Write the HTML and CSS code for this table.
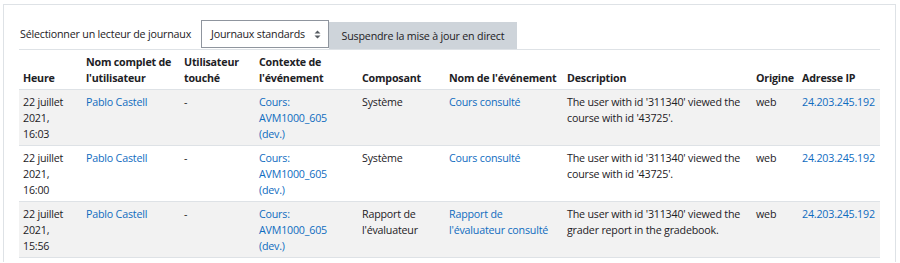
FILE: index.html
```html
<!DOCTYPE html>
<html lang="fr">
<head>
<meta charset="utf-8">
<title>Journaux</title>
<link rel="stylesheet" href="styles.css">
</head>
<body>
<div class="card">
  <div class="controls">
    <span class="label">Sélectionner un lecteur de journaux</span>
    <div class="select">
      <span>Journaux standards</span>
      <svg class="updown" width="7" height="9" viewBox="0 0 7 9"><path d="M0.5 3.5 L3.5 0.5 L6.5 3.5 Z M0.5 5.5 L3.5 8.5 L6.5 5.5 Z" fill="#555a60"/></svg>
    </div>
    <button class="btn">Suspendre la mise à jour en direct</button>
  </div>
  <table class="logs">
    <colgroup>
      <col class="c-time"><col class="c-name"><col class="c-aff"><col class="c-ctx"><col class="c-comp"><col class="c-ev"><col class="c-desc"><col class="c-orig"><col class="c-ip">
    </colgroup>
    <thead>
      <tr>
        <th>Heure</th>
        <th>Nom complet de l'utilisateur</th>
        <th>Utilisateur touché</th>
        <th>Contexte de l'événement</th>
        <th>Composant</th>
        <th>Nom de l'événement</th>
        <th>Description</th>
        <th>Origine</th>
        <th>Adresse IP</th>
      </tr>
    </thead>
    <tbody>
      <tr>
        <td>22 juillet 2021, 16:03</td>
        <td><a href="#">Pablo Castell</a></td>
        <td>-</td>
        <td><a href="#">Cours: AVM1000_605 (dev.)</a></td>
        <td>Système</td>
        <td><a href="#">Cours consulté</a></td>
        <td>The user with id '311340' viewed the course with id '43725'.</td>
        <td>web</td>
        <td><a href="#">24.203.245.192</a></td>
      </tr>
      <tr>
        <td>22 juillet 2021, 16:00</td>
        <td><a href="#">Pablo Castell</a></td>
        <td>-</td>
        <td><a href="#">Cours: AVM1000_605 (dev.)</a></td>
        <td>Système</td>
        <td><a href="#">Cours consulté</a></td>
        <td>The user with id '311340' viewed the course with id '43725'.</td>
        <td>web</td>
        <td><a href="#">24.203.245.192</a></td>
      </tr>
      <tr>
        <td>22 juillet 2021, 15:56</td>
        <td><a href="#">Pablo Castell</a></td>
        <td>-</td>
        <td><a href="#">Cours: AVM1000_605 (dev.)</a></td>
        <td>Rapport de l'évaluateur</td>
        <td><a href="#">Rapport de l'évaluateur consulté</a></td>
        <td>The user with id '311340' viewed the grader report in the gradebook.</td>
        <td>web</td>
        <td><a href="#">24.203.245.192</a></td>
      </tr>
    </tbody>
  </table>
</div>
</body>
</html>
```
FILE: styles.css
```css
html, body {
  margin: 0;
  padding: 0;
  background: #fff;
}
body {
  font-family: "Open Sans", "Noto Sans", sans-serif;
  font-size: 10.7px;
  line-height: 16px;
  letter-spacing: -0.2px;
  color: #1d2125;
}
.card {
  margin: 4px 0 0 3px;
  width: 893px;
  box-sizing: border-box;
  border: 1px solid #dee2e6;
  border-bottom: none;
  padding: 15px 14px 4px 15px;
}
.controls {
  display: flex;
  align-items: flex-start;
  height: 29px;
}
.label {
  width: 181px;
  padding-left: 1px;
  margin-top: 6px;
  white-space: nowrap;
}
.select {
  box-sizing: border-box;
  width: 128px;
  height: 28px;
  border: 1px solid #8f959e;
  display: flex;
  align-items: center;
  justify-content: space-between;
  padding: 0 7px 0 9px;
  white-space: nowrap;
}
.updown {
  display: block;
}
.btn {
  margin-top: 2px;
  height: 27px;
  width: 188px;
  border: none;
  background: #ced4da;
  color: #1d2125;
  font: inherit;
  letter-spacing: inherit;
  padding: 0 10px;
  white-space: nowrap;
}
.logs {
  width: 861px;
  border-collapse: collapse;
  table-layout: fixed;
}
.c-time { width: 63px; }
.c-name { width: 98px; }
.c-aff { width: 75px; }
.c-ctx { width: 103px; }
.c-comp { width: 87px; }
.c-ev { width: 118px; }
.c-desc { width: 189px; }
.c-orig { width: 46px; }
.c-ip { width: 82px; }
.logs th,
.logs td {
  padding: 4px 4px 3px 4px;
  text-align: left;
  border-top: 1px solid #dee2e6;
}
.logs th {
  vertical-align: bottom;
  font-weight: 700;
  border-bottom: 1px solid #dee2e6;
}
.logs td {
  vertical-align: top;
}
.logs tbody tr:nth-child(odd) {
  background: #f2f2f2;
}
.logs tbody tr:last-child td {
  border-bottom: 1px solid #dee2e6;
}
.logs a {
  color: #0f6cbf;
  text-decoration: none;
}
```
